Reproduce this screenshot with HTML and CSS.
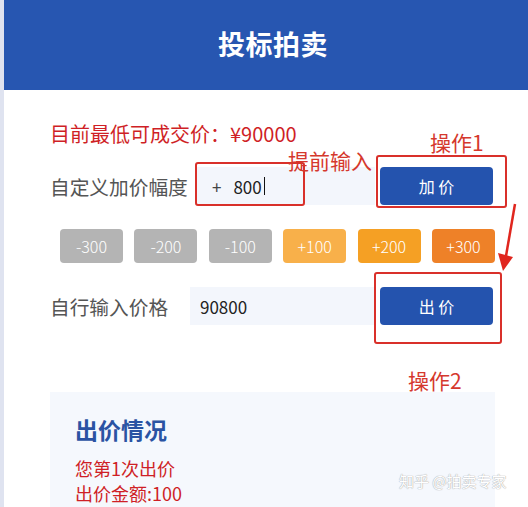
FILE: index.html
```html
<!DOCTYPE html>
<html lang="zh-CN">
<head>
  <meta charset="UTF-8" />
  <meta name="viewport" content="width=device-width, initial-scale=1.0" />
  <title>投标拍卖</title>
  <link rel="stylesheet" href="styles.css">
</head>
<body>
  <div class="page">
    <div class="side-strip"></div>

    <div class="main">
      <header class="top-bar">
        <h1>投标拍卖</h1>
      </header>

      <div class="content">
        <div class="lowest">目前最低可成交价：¥90000</div>

        <div class="bid-row">
          <span class="row-label">自定义加价幅度</span>
          <div class="field field-step">
            <span class="plus">+</span>
            <span>800</span><span class="caret"></span>
          </div>
          <button class="btn-blue">加 价</button>
        </div>

        <div class="chips">
          <span class="chip chip-minus">-300</span>
          <span class="chip chip-minus">-200</span>
          <span class="chip chip-minus">-100</span>
          <span class="chip chip-p1">+100</span>
          <span class="chip chip-p2">+200</span>
          <span class="chip chip-p3">+300</span>
        </div>

        <div class="bid-row bid-row-own">
          <span class="row-label">自行输入价格</span>
          <div class="field">90800</div>
          <button class="btn-blue">出 价</button>
        </div>

        <div class="record">
          <h2>出价情况</h2>
          <p>您第1次出价</p>
          <p>出价金额:100</p>
        </div>
      </div>
    </div>

    <!-- 标注：操作步骤 -->
    <div class="mark mark-input"></div>
    <div class="mark mark-add"></div>
    <div class="mark mark-bid"></div>
    <span class="note note-input">提前输入</span>
    <span class="note note-step1">操作1</span>
    <span class="note note-step2">操作2</span>
    <svg class="arrow" width="528" height="507" viewBox="0 0 528 507">
      <line x1="515" y1="204" x2="506" y2="256" stroke="#e0261e" stroke-width="2.5" />
      <polygon points="498,253 513,257 503,271" fill="#e0261e" />
    </svg>

    <span class="watermark">知乎 @拍卖专家</span>
  </div>
</body>
</html>
```

FILE: styles.css
```css
body {
  margin: 0;
  font-family: "Noto Sans CJK SC", "Noto Sans", sans-serif;
  background-color: #fff;
}
.page {
  position: relative;
  display: flex;
  height: 507px;
  overflow: hidden;
}
.side-strip {
  width: 4px;
  background-color: #dfe3f0;
}
.main {
  flex: 1;
}
.top-bar {
  height: 90px;
  padding-left: 14px;
  background-color: #2756b1;
  display: flex;
  align-items: center;
  justify-content: center;
}
.top-bar h1 {
  margin: 0 0 4px 0;
  color: #fff;
  font-size: 27px;
  font-weight: bold;
  letter-spacing: 0.5px;
}
.content {
  padding: 0 33px 0 46px;
}
.lowest {
  margin-top: 31px;
  font-size: 20px;
  line-height: 26px;
  color: #cf1f26;
}
.bid-row {
  margin-top: 20px;
  display: flex;
  align-items: center;
  height: 38px;
}
.bid-row-own {
  margin-top: 24px;
}
.row-label {
  width: 140px;
  font-size: 19.7px;
  color: #555;
}
.field {
  width: 175px;
  height: 38px;
  margin-right: 5px;
  padding-left: 10px;
  display: flex;
  align-items: center;
  background-color: #f3f6fc;
  font-size: 17px;
  color: #222;
}
.field-step {
  margin-left: 5px;
  width: 163px;
  padding-left: 17px;
}
.plus {
  margin-right: 12px;
  color: #444;
}
.caret {
  display: inline-block;
  width: 1px;
  height: 18px;
  margin-left: 2px;
  background-color: #111;
}
.btn-blue {
  width: 113px;
  height: 38px;
  border: none;
  border-radius: 4px;
  background-color: #2453ae;
  color: #fff;
  font-family: inherit;
  font-size: 16px;
}
.chips {
  margin-top: 24px;
  padding-left: 10px;
  display: flex;
  gap: 11.4px;
}
.chip {
  width: 63px;
  height: 34px;
  border-radius: 4px;
  display: flex;
  align-items: center;
  justify-content: center;
  color: #fff;
  font-size: 16px;
  font-weight: 300;
}
.chip-minus {
  background-color: #b4b4b4;
}
.chip-p1 {
  background-color: #f8b04a;
}
.chip-p2 {
  background-color: #f5a024;
}
.chip-p3 {
  background-color: #ee8128;
}
.record {
  margin-top: 67px;
  padding: 22px 25px 0;
  height: 115px;
  box-sizing: border-box;
  background-color: #f5f8fd;
}
.record h2 {
  margin: 0 0 12px 0;
  font-size: 23px;
  line-height: 30px;
  color: #2a53a3;
}
.record p {
  margin: 0;
  font-size: 18px;
  line-height: 25px;
  color: #cf1f26;
}
/* 红色标注框和文字 */
.mark {
  position: absolute;
  border: 2.5px solid #d9302a;
  border-radius: 3px;
  box-sizing: border-box;
}
.mark-input {
  left: 195px;
  top: 162px;
  width: 110px;
  height: 44px;
}
.mark-add {
  left: 376px;
  top: 155px;
  width: 131px;
  height: 53px;
}
.mark-bid {
  left: 374px;
  top: 272px;
  width: 128px;
  height: 72px;
}
.note {
  position: absolute;
  font-size: 21px;
  line-height: 24px;
  color: #d5382d;
}
.note-input {
  left: 288px;
  top: 148px;
}
.note-step1 {
  left: 430px;
  top: 130px;
}
.note-step2 {
  left: 408px;
  top: 368px;
}
.arrow {
  position: absolute;
  left: 0;
  top: 0;
}
.watermark {
  position: absolute;
  left: 399px;
  top: 470px;
  font-size: 15px;
  color: #fff;
  text-shadow: 0 0 1px #aaa, 0 0 1px #aaa;
}
```
